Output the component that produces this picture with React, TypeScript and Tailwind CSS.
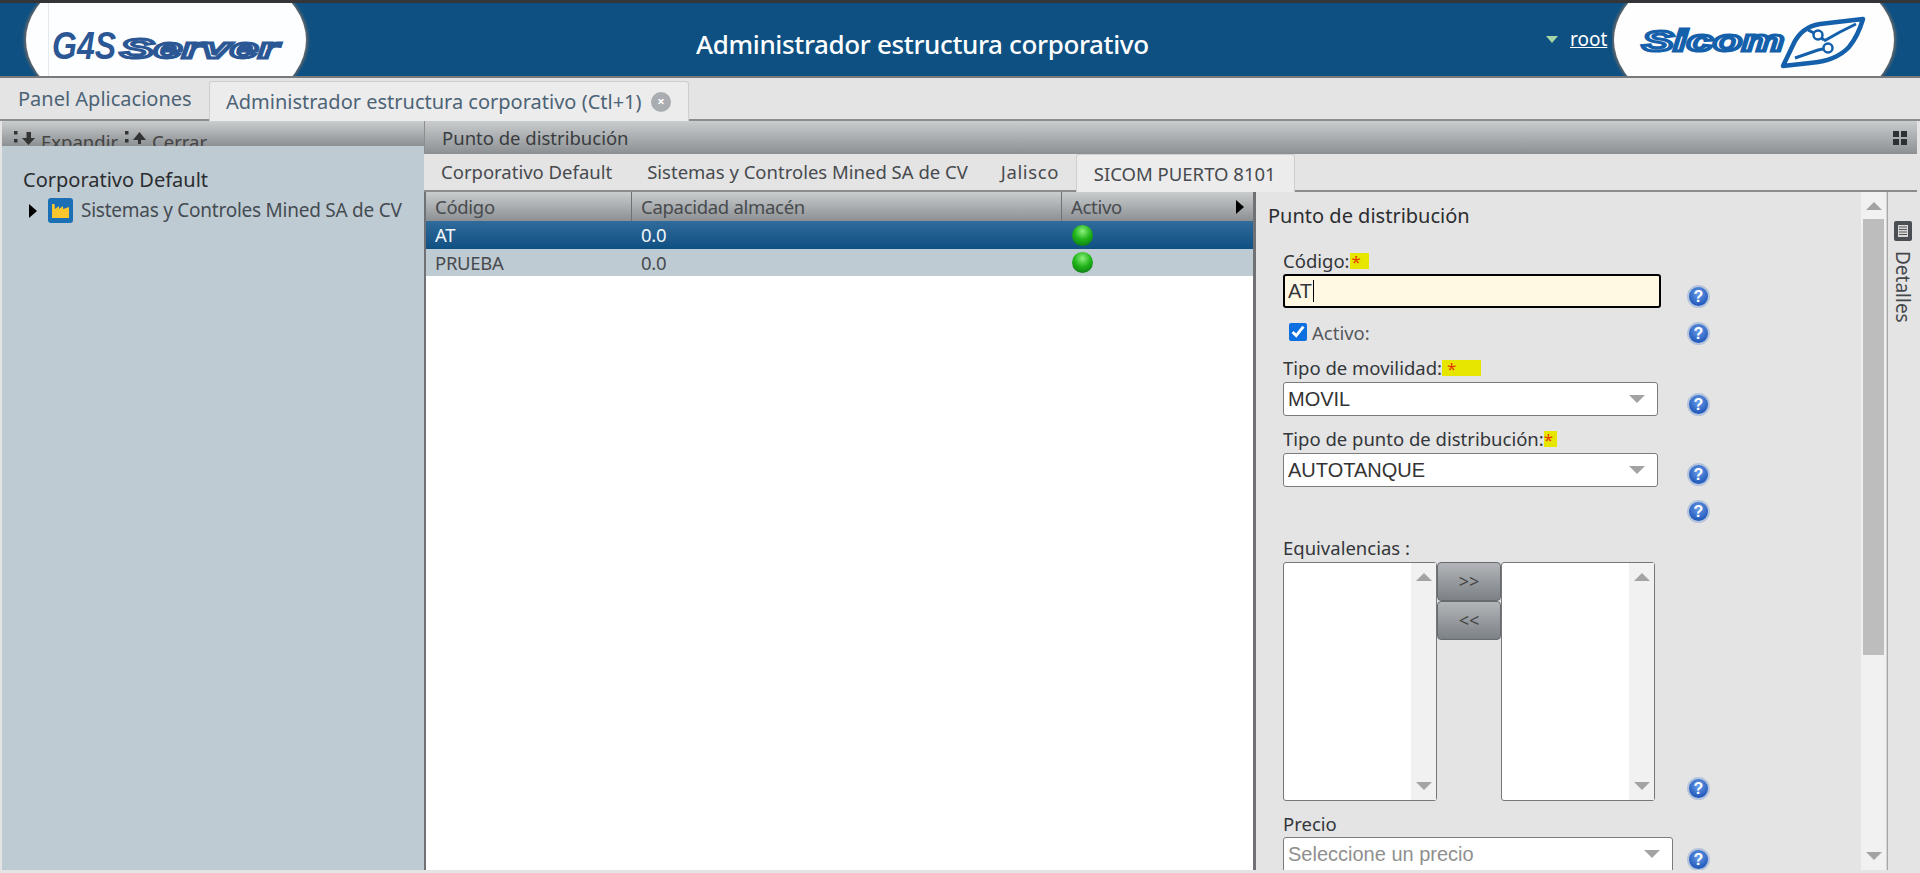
import React from "react";

const font = "[font-family:'Noto_Sans',sans-serif]";

function G4SLogo() {
  return (
    <svg width="330" height="73" viewBox="0 3 330 73" className="shrink-0">
      <defs>
        <filter id="b1" x="-10%" y="-10%" width="120%" height="120%"><feGaussianBlur stdDeviation="1.5" /></filter>
      </defs>
      <ellipse cx="166" cy="40" rx="142" ry="84" fill="#6d6a68" filter="url(#b1)" />
      <ellipse cx="166" cy="40" rx="140" ry="84" fill="#fdfeff" />
      <line x1="48.5" y1="3" x2="48.5" y2="76" stroke="#e3e8ef" />
      <text x="52" y="59" textLength="64" lengthAdjust="spacingAndGlyphs" fontFamily="Liberation Sans" fontWeight="700" fontStyle="italic" fontSize="38" fill="#2c5795">G4S</text>
      <text x="120" y="58" textLength="158" lengthAdjust="spacingAndGlyphs" fontFamily="Liberation Sans" fontWeight="700" fontStyle="italic" fontSize="28" fill="#ffffff" stroke="#2c5795" strokeWidth="2.8">Server</text>
    </svg>
  );
}

function SicomLogo() {
  return (
    <svg width="308" height="73" viewBox="1612 3 308 73" className="shrink-0">
      <defs>
        <filter id="b2" x="-10%" y="-10%" width="120%" height="120%"><feGaussianBlur stdDeviation="1.5" /></filter>
      </defs>
      <ellipse cx="1754" cy="40" rx="142" ry="84" fill="#6d6a68" filter="url(#b2)" />
      <ellipse cx="1754" cy="40" rx="140" ry="84" fill="#fefefe" />
      <text x="1642" y="51" textLength="142" lengthAdjust="spacingAndGlyphs" fontFamily="Liberation Sans" fontWeight="700" fontStyle="italic" fontSize="29" fill="#ffffff" stroke="#1560ab" strokeWidth="3">Sicom</text>
      <path d="M1783 66 L1793 45 Q1801 27 1820 24 L1863 19 Q1858 36 1849 47 Q1836 61 1810 63 Z" fill="#fff" stroke="#1560ab" strokeWidth="4.5" strokeLinejoin="round" />
      <path d="M1795 58 L1818 50 L1828 48 M1824 40 L1818 35 L1808 30 M1824 41 L1840 32 L1856 24" fill="none" stroke="#1560ab" strokeWidth="3" />
      <circle cx="1818" cy="35" r="4.5" fill="#fff" stroke="#1560ab" strokeWidth="2.5" />
      <circle cx="1828" cy="48" r="4.5" fill="#fff" stroke="#1560ab" strokeWidth="2.5" />
    </svg>
  );
}

function Help() {
  return (
    <span className="flex h-[23px] w-[23px] shrink-0 items-center justify-center rounded-full border-2 border-[#b4c4dc] bg-[radial-gradient(circle_at_50%_35%,#6a9ce8,#2159bb_75%)] text-[16px] leading-none font-bold text-white [font-family:'Liberation_Sans',sans-serif]">
      ?
    </span>
  );
}

function Ball() {
  return <span className="block h-[21px] w-[21px] rounded-full bg-[radial-gradient(circle_at_50%_30%,#8cf07c,#22b51c_45%,#0c7f10_85%)]" />;
}

function Star({ className }: { className: string }) {
  return <span className={"inline-block h-[16px] bg-[#e6e600] text-[17px] leading-[18px] text-[#e63a00] " + className}>*</span>;
}

function Caret({ up = false }: { up?: boolean }) {
  return (
    <svg width="16" height="8" viewBox="0 0 16 8" className="block">
      <path d={up ? "M8 0 L16 8 H0 Z" : "M0 0 H16 L8 8 Z"} fill="#a3a3a3" />
    </svg>
  );
}

function Select({ text, width, muted = false, rounded = true }: { text: string; width: string; muted?: boolean; rounded?: boolean }) {
  return (
    <div className={"flex h-[34px] items-center justify-between border border-[#7b7b7b] bg-white pr-[12px] pl-[4px] text-[20px] [font-family:'Liberation_Sans',sans-serif] " + width + (muted ? " text-[#8f8f8f]" : " text-[#333333]") + (rounded ? " rounded-[3px]" : " rounded-t-[3px]")}>
      <span>{text}</span>
      <Caret />
    </div>
  );
}

function ListBox({ width }: { width: string }) {
  return (
    <div className={"flex h-[239px] justify-end rounded-[3px] border border-[#777] bg-white " + width}>
      <div className="flex w-[25px] flex-col items-center justify-between bg-[#f1f1f1] py-[10px]">
        <Caret up />
        <Caret />
      </div>
    </div>
  );
}

function MoveButton({ text }: { text: string }) {
  return (
    <button className="flex h-[39px] w-[64px] items-center justify-center rounded-[4px] border border-[#666b70] bg-linear-to-b from-[#b3b6b9] to-[#7c8186] text-[18px] text-[#444]">
      {text}
    </button>
  );
}

function FormRow({ children, height, helpPad = 0 }: { children: React.ReactNode; height: string; helpPad?: number }) {
  return (
    <div className={"flex items-end " + height}>
      <div className="w-[403px] shrink-0">{children}</div>
      <div className="ml-[1px]" style={{ paddingBottom: helpPad }}><Help /></div>
    </div>
  );
}

export default function App() {
  return (
    <div className={"flex h-[873px] w-[1920px] flex-col overflow-hidden bg-[#e4e4e4] text-[#3d3f42] " + font}>
      <div className="h-[3px] shrink-0 bg-[#333539]" />
      <header className="flex h-[73px] shrink-0 items-center overflow-hidden bg-[#0e5082]">
        <G4SLogo />
        <h1 className="ml-[366px] w-[453px] pt-[9px] text-[26px] leading-none font-medium tracking-[-0.35px] whitespace-nowrap text-white">Administrador estructura corporativo</h1>
        <div className="ml-[397px] flex w-[60px] items-center gap-[12px]">
          <svg width="12" height="7" viewBox="0 0 12 7" className="shrink-0"><path d="M0 0 H12 L6 7 Z" fill="#a5d6a7" /></svg>
          <a className="pb-[1px] text-[19px] leading-none text-white underline">root</a>
        </div>
        <div className="ml-[6px]"><SicomLogo /></div>
      </header>
      <div className="h-[2px] shrink-0 bg-[#77797b]" />

      <nav className="flex h-[43px] shrink-0 items-end border-b-2 border-[#8a8c8e] bg-[#e4e4e4] text-[20px] text-[#4c6376]">
        <div className="flex h-[40px] w-[209px] items-center pl-[18px] whitespace-nowrap">Panel Aplicaciones</div>
        <div className="-mb-[2px] flex h-[40px] w-[480px] items-center rounded-t-[3px] border border-b-0 border-[#cfcfcf] bg-[#ececec] pl-[16px] whitespace-nowrap">
          <span className="w-[425px]">Administrador estructura corporativo (Ctl+1)</span>
          <span className="flex h-[20px] w-[20px] items-center justify-center rounded-full bg-[#a9adb1] text-[13px] leading-none font-bold text-white">×</span>
        </div>
      </nav>

      <main className="flex min-h-0 flex-1 pb-[3px] pl-[2px]">
        <aside className="flex w-[422px] shrink-0 flex-col bg-[#bfcbd2]">
          <div className="flex h-[25px] shrink-0 items-start overflow-hidden bg-linear-to-b from-[#c9cdce] to-[#8c9093] pl-[10px] text-[18.5px] leading-[25px] text-[#444]">
            <div className="flex items-start pt-[8px]">
              <svg width="27" height="17" viewBox="0 0 27 17" className="shrink-0">
                <path d="M2 2h3.5v3.5H2zM2 10h3.5v3.5H2zM14.5 3h4.500v6H23l-6.500 7-6.500-7h4.500z" fill="#333" />
              </svg>
              <span className="ml-[2px]">Expandir</span>
              <svg width="27" height="17" viewBox="0 0 27 17" className="ml-[5px] shrink-0">
                <path d="M2 2h3.500v3.500H2zM2 10h3.500v3.500H2zM15 15v-4h-5l6.500-8 6.500 8h-5v4z" fill="#333" />
              </svg>
              <span className="ml-[2px]">Cerrar</span>
            </div>
          </div>
          <div className="pt-[20px] pl-[21px]">
            <div className="text-[20px] leading-[28px] whitespace-nowrap text-[#2b2d30]">Corporativo Default</div>
            <div className="mt-[3px] flex h-[27px] items-center pl-[6px]">
              <svg width="8" height="14" viewBox="0 0 8 14" className="shrink-0"><path d="M0 0 L8 7 L0 14 Z" fill="#000" /></svg>
              <span className="ml-[11px] flex h-[25px] w-[25px] shrink-0 items-center justify-center rounded-[3px] bg-[#1a6fb5]">
                <svg width="17" height="14" viewBox="0 0 17 14"><path d="M0 14V0h2.500l.5 5 4-3v3l4-3v3l6-2v11z" fill="#f7c52e" /></svg>
              </span>
              <span className="ml-[8px] text-[19px] tracking-[-0.25px] whitespace-nowrap text-[#454b52]">Sistemas y Controles Mined SA de CV</span>
            </div>
          </div>
        </aside>

        <section className="flex min-w-0 flex-1 flex-col pr-[3px]">
          <div className="flex h-[33px] shrink-0 items-center justify-between border-l border-[#8b8d8f] bg-linear-to-b from-[#c9cdce] to-[#8c9093] pr-[10px] pl-[17px] text-[18.5px] text-[#3a3c40]">
            <span>Punto de distribución</span>
            <span className="grid grid-cols-2 gap-[2px]">
              <i className="block h-[6px] w-[6px] bg-[#2d3034]" /><i className="block h-[6px] w-[6px] bg-[#2d3034]" />
              <i className="block h-[6px] w-[6px] bg-[#2d3034]" /><i className="block h-[6px] w-[6px] bg-[#2d3034]" />
            </span>
          </div>
          <div className="flex h-[38px] shrink-0 items-end border-b-2 border-[#8a8c8e] pl-[1px] text-[18.5px] whitespace-nowrap text-[#474a4e]">
            <div className="flex h-[36px] items-center pl-[16px]">Corporativo Default</div>
            <div className="ml-[35px] flex h-[36px] items-center">Sistemas y Controles Mined SA de CV</div>
            <div className="ml-[33px] flex h-[36px] w-[58px] items-center tracking-[0.6px]">Jalisco</div>
            <div className="-mb-[2px] ml-[17px] flex h-[38px] w-[219px] items-center rounded-t-[3px] border border-b-0 border-[#cfcfcf] bg-[#ececec] pl-[17px]">SICOM PUERTO 8101</div>
          </div>

          <div className="flex min-h-0 flex-1 overflow-hidden">
            <div className="flex w-[832px] shrink-0 flex-col border-r-[3px] border-l-[2px] border-[#6f7174] bg-white text-[18.5px] tracking-[-0.3px]">
              <div className="flex h-[29px] shrink-0 items-center bg-linear-to-b from-[#c9cdce] to-[#8c9093] text-[#474a4e]">
                <div className="flex h-full w-[206px] items-center border-r border-[#6f7174] pl-[9px]">Código</div>
                <div className="flex h-full w-[430px] items-center border-r border-[#6f7174] pl-[9px]">Capacidad almacén</div>
                <div className="flex h-full flex-1 items-center justify-between pr-[9px] pl-[9px]">
                  <span>Activo</span>
                  <svg width="8" height="14" viewBox="0 0 8 14"><path d="M0 0 L8 7 L0 14 Z" fill="#000" /></svg>
                </div>
              </div>
              <div className="flex h-[28px] shrink-0 items-center bg-linear-to-b from-[#2f6b9b] to-[#0e5082] text-[#f2f6f9]">
                <div className="w-[206px] pl-[9px]">AT</div>
                <div className="w-[430px] pl-[9px]">0.0</div>
                <div className="pl-[10px]"><Ball /></div>
              </div>
              <div className="flex h-[27px] shrink-0 items-center bg-[#bfcbd2] text-[#474a4e]">
                <div className="w-[206px] pl-[9px]">PRUEBA</div>
                <div className="w-[430px] pl-[9px]">0.0</div>
                <div className="pl-[10px]"><Ball /></div>
              </div>
            </div>

            <div className="min-w-0 flex-1 overflow-hidden bg-[#e4e4e4] pt-[10px] pl-[12px]">
              <div className="text-[20px] leading-[28px] whitespace-nowrap text-[#2b2d30]">Punto de distribución</div>
              <div className="pl-[15px] text-[18.5px] leading-[25px] whitespace-nowrap text-[#33363a]">
                <FormRow height="h-[78px]" helpPad={0}>
                  <div className="flex h-[25px] items-center">Código:<Star className="w-[19px] pl-[2px]" /></div>
                  <div className="mt-[1px] flex h-[34px] w-[378px] items-center rounded-[3px] border-2 border-black bg-[#fff9e3] pl-[3px] text-[20px] [font-family:'Liberation_Sans',sans-serif]">
                    AT<span className="ml-[1px] h-[22px] w-px bg-black" />
                  </div>
                </FormRow>
                <FormRow height="h-[37px]">
                  <div className="flex h-[24px] items-center pb-[2px] pl-[6px] text-[#55585c]">
                    <input type="checkbox" defaultChecked className="m-0 h-[18px] w-[18px] accent-[#0b6fe0]" />
                    <span className="ml-[5px]">Activo:</span>
                  </div>
                </FormRow>
                <FormRow height="h-[71px]" helpPad={0}>
                  <div className="flex h-[25px] items-center">Tipo de movilidad:<Star className="w-[39px] pl-[5px]" /></div>
                  <div className="mt-[2px]"><Select text="MOVIL" width="w-[375px]" /></div>
                </FormRow>
                <FormRow height="h-[71px]" helpPad={1}>
                  <div className="flex h-[25px] items-center">Tipo de punto de distribución:<Star className="w-[13px]" /></div>
                  <div className="mt-[2px]"><Select text="AUTOTANQUE" width="w-[375px]" /></div>
                </FormRow>
                <FormRow height="h-[36px]"><span /></FormRow>
                <div className="flex h-[279px] items-end">
                  <div className="w-[403px] shrink-0 pb-[1px]">
                    <div className="h-[25px]">Equivalencias :</div>
                    <div className="mt-[2px] flex">
                      <ListBox width="w-[154px]" />
                      <div className="flex flex-col">
                        <MoveButton text=">>" />
                        <MoveButton text="<<" />
                      </div>
                      <ListBox width="w-[154px]" />
                    </div>
                  </div>
                  <div className="ml-[1px] pb-[2px]"><Help /></div>
                </div>
                <div className="mt-[9px] flex">
                  <div className="w-[403px] shrink-0">
                    <div className="h-[25px]">Precio</div>
                    <div className="mt-[1px]"><Select text="Seleccione un precio" width="w-[390px]" muted rounded={false} /></div>
                  </div>
                  <div className="ml-[1px] pt-[37px]"><Help /></div>
                </div>
              </div>
            </div>

            <div className="flex w-[26px] shrink-0 flex-col items-center border-r border-[#d4d4d4] bg-[#f1f1f1] pt-[10px] pb-[10px]">
              <Caret up />
              <div className="mt-[9px] h-[436px] w-[21px] bg-[#bdbdbd]" />
              <div className="mt-auto"><Caret /></div>
            </div>
            <div className="flex w-[30px] shrink-0 flex-col items-center border-l border-[#a8a8a8] bg-[#e4e4e4] pt-[29px]">
              <span className="flex h-[20px] w-[18px] items-center justify-center rounded-[2px] bg-[#4b4e52]">
                <svg width="12" height="14" viewBox="0 0 12 14"><path d="M1 1h10v12H1z" fill="#d9d9d9" /><path d="M2 3h8M2 5.500h8M2 8h8M2 10.500h8" stroke="#555" /></svg>
              </span>
              <span className="mt-[10px] text-[19px] leading-[20px] text-[#44474b] [writing-mode:vertical-rl]">Detalles</span>
            </div>
          </div>
        </section>
      </main>
    </div>
  );
}
